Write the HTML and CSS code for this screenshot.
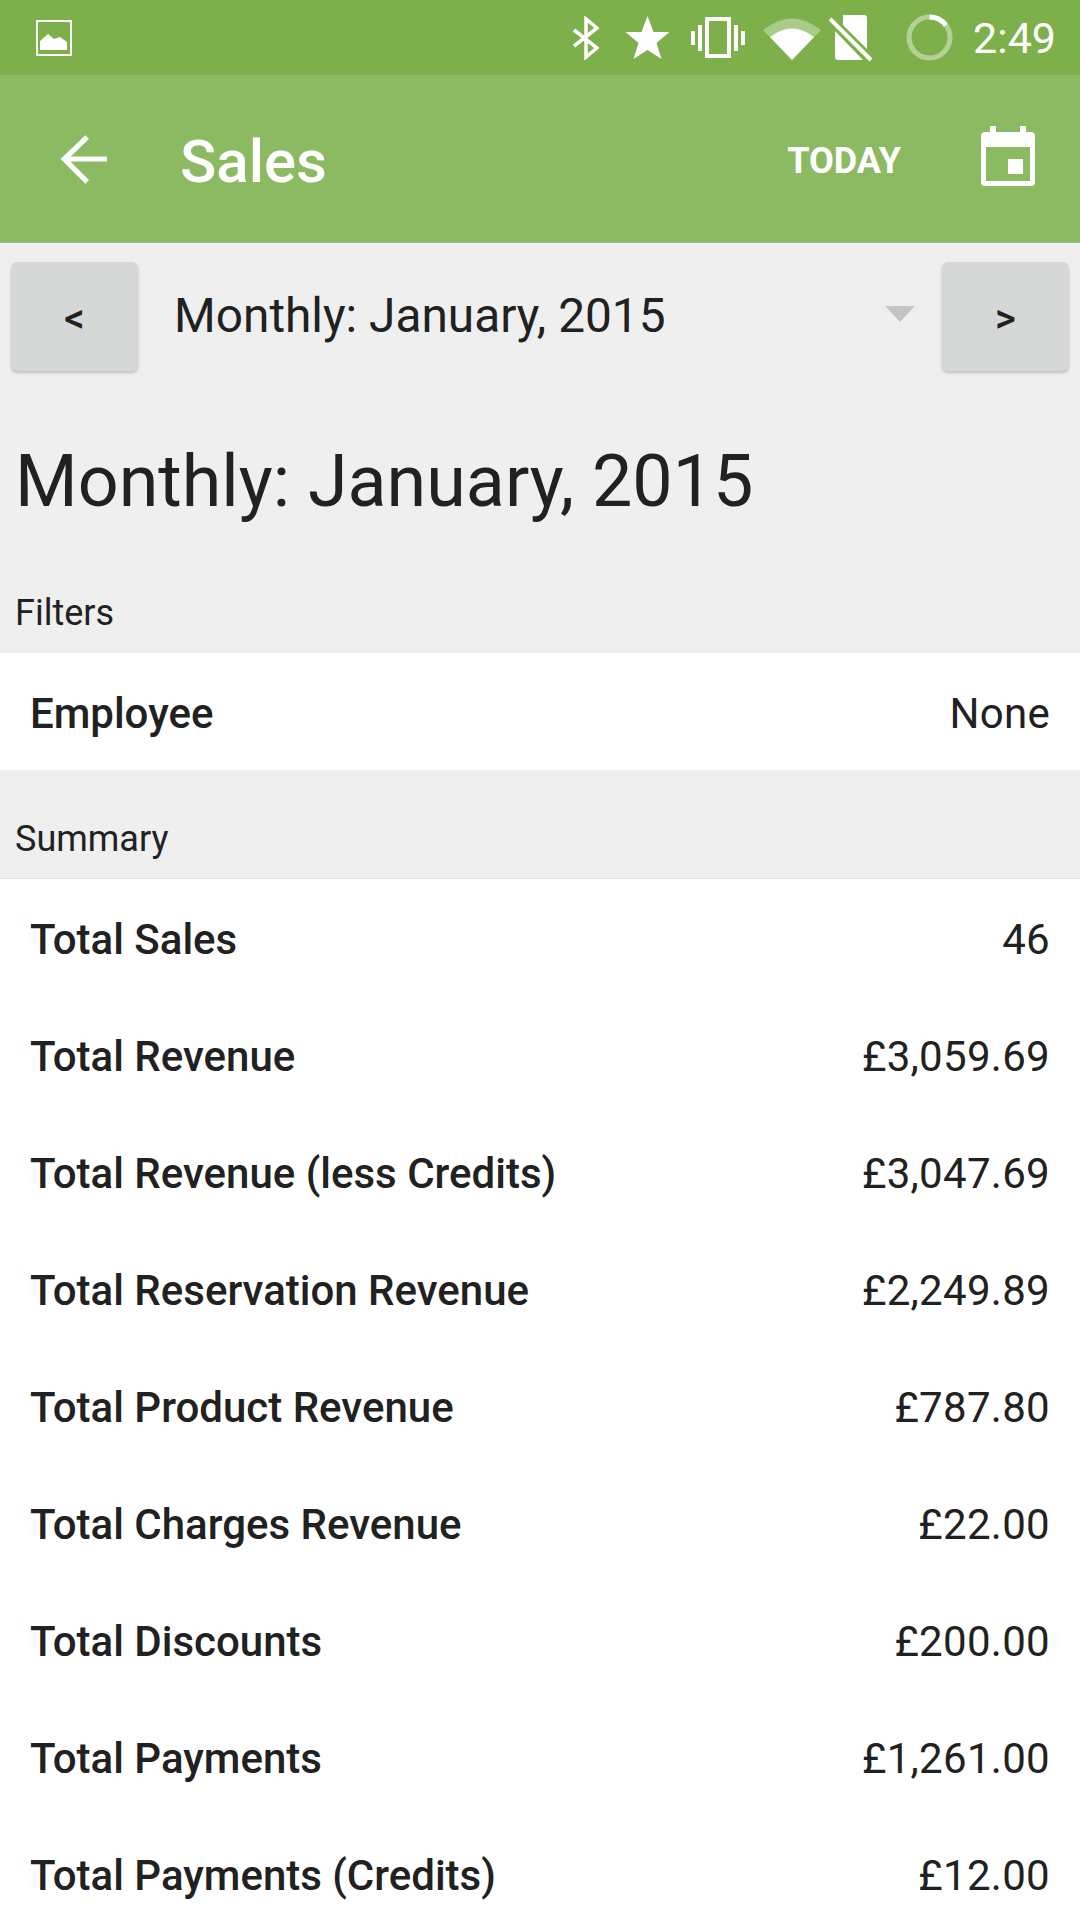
FILE: index.html
```html
<!DOCTYPE html>
<html lang="en">

<head>
    <meta charset="UTF-8">
    <meta name="viewport" content="width=device-width, initial-scale=1.0">
    <link rel="stylesheet" href="styles.css">
</head>

<body>
    <div class="StatusBar">
        <svg class="NotifIcon" width="36" height="36" viewBox="0 0 36 36">
            <path fill="#fff" fill-rule="evenodd" d="M0 0H36V36H0ZM2 2V34H34V2Z" />
            <path fill="#fff" d="M4 30V21L12 14L18 19L24 17L31 22V30Z" />
        </svg>
        <div class="StatusIcons">
            <svg class="IconBluetooth" width="26" height="44" viewBox="0 0 26 44">
                <path fill="none" stroke="#fff" stroke-width="3.5" d="M1 14L24 32L13 41V3L24 12L1 30" />
            </svg>
            <svg class="IconStar" width="45" height="44" viewBox="0 0 44 44">
                <path fill="#fff" d="M22 0L28 16L44 16L31 27L36 43L22 34L8 43L13 27L0 16L16 16Z" />
            </svg>
            <svg class="IconVibrate" width="54" height="42" viewBox="0 0 54 42">
                <path fill="none" stroke="#fff" stroke-width="4" d="M16 2H38V39H16Z" />
                <path fill="#fff" d="M0 14H4V28H0ZM7 8H11V34H7ZM43 8H47V34H43ZM50 14H54V28H50Z" />
            </svg>
            <svg class="IconWifi" width="58" height="44" viewBox="0 0 58 44">
                <path fill="#fff" opacity="0.35" d="M0 14Q29 -9 58 14L29 44Z" />
                <path fill="#fff" d="M7 21Q29 4 51 21L29 44Z" />
            </svg>
            <svg class="IconSim" width="44" height="48" viewBox="0 0 44 48">
                <path fill="#fff" d="M14 1H35Q38 1 38 4V35L14 11ZM6 10V43Q6 46 9 46H34L6 17Z" />
                <path fill="none" stroke="#fff" stroke-width="4" d="M1 5L42 46" />
            </svg>
            <svg class="IconBattery" width="47" height="47" viewBox="0 0 46 46">
                <circle cx="23" cy="23" r="20" fill="none" stroke="#fff" stroke-opacity="0.42" stroke-width="5" />
                <path fill="none" stroke="#fff" stroke-width="5" d="M23 3A20 20 0 0 1 39 11" />
            </svg>
            <span class="Clock">2:49</span>
        </div>
    </div>

    <div class="Toolbar">
        <svg class="BackArrow" width="50" height="50" viewBox="0 0 48 48">
            <path fill="none" stroke="#fff" stroke-width="5" d="M47 24H5M28 3L6 24L28 46" />
        </svg>
        <div class="ToolbarTitle">Sales</div>
        <div class="TodayButton">TODAY</div>
        <svg class="CalendarIcon" width="54" height="60" viewBox="0 0 54 60">
            <path fill="#fff" fill-rule="evenodd"
                d="M9 0H15V6H39V0H45V6H50Q54 6 54 10V56Q54 60 50 60H4Q0 60 0 56V10Q0 6 4 6H9ZM5 21V55H49V21Z" />
            <path fill="#fff" d="M27 33H42V48H27Z" />
        </svg>
    </div>

    <div class="DateNav">
        <div class="NavButton">&lt;</div>
        <div class="DateSpinner">
            <span>Monthly: January, 2015</span>
            <div class="SpinnerArrow"></div>
        </div>
        <div class="NavButton">&gt;</div>
    </div>

    <h1 class="PeriodTitle">Monthly: January, 2015</h1>

    <div class="SectionLabel FiltersLabel">Filters</div>
    <div class="Row">
        <span class="RowName">Employee</span>
        <span class="RowValue">None</span>
    </div>

    <div class="SectionLabel SummaryLabel">Summary</div>
    <div class="SummaryList">
        <div class="Row"><span class="RowName">Total Sales</span><span class="RowValue">46</span></div>
        <div class="Row"><span class="RowName">Total Revenue</span><span class="RowValue">£3,059.69</span></div>
        <div class="Row"><span class="RowName">Total Revenue (less Credits)</span><span class="RowValue">£3,047.69</span></div>
        <div class="Row"><span class="RowName">Total Reservation Revenue</span><span class="RowValue">£2,249.89</span></div>
        <div class="Row"><span class="RowName">Total Product Revenue</span><span class="RowValue">£787.80</span></div>
        <div class="Row"><span class="RowName">Total Charges Revenue</span><span class="RowValue">£22.00</span></div>
        <div class="Row"><span class="RowName">Total Discounts</span><span class="RowValue">£200.00</span></div>
        <div class="Row"><span class="RowName">Total Payments</span><span class="RowValue">£1,261.00</span></div>
        <div class="Row"><span class="RowName">Total Payments (Credits)</span><span class="RowValue">£12.00</span></div>
    </div>
</body>

</html>
```

FILE: styles.css
```css
html {
    height: 100%;
    overflow: hidden;
}

body {
    margin: 0;
    height: 1920px;
    overflow: hidden;
    font-family: 'Roboto', sans-serif;
    background-color: #efefef;
    color: #212121;
}

.StatusBar {
    height: 75px;
    background-color: #7db04a;
    display: flex;
    align-items: center;
    justify-content: space-between;
    padding: 0 24px 0 36px;
    box-sizing: border-box;
}

.NotifIcon {
    margin-top: 1px;
}

.StatusIcons {
    display: flex;
    align-items: center;
}

.IconBluetooth {
    margin-right: 26px;
}

.IconStar {
    margin-right: 21px;
}

.IconVibrate {
    margin-right: 18px;
}

.IconWifi {
    margin-right: 8px;
}

.IconSim {
    margin-right: 33px;
}

.IconBattery {
    margin-right: 20px;
}

.Clock {
    color: #ffffff;
    font-size: 43px;
}

.Toolbar {
    height: 168px;
    background-color: #8cba62;
    border-bottom: 1px solid #a3b893;
    box-sizing: border-box;
    display: flex;
    align-items: center;
    padding: 0 45px 0 58px;
    color: #ffffff;
}

.BackArrow {
    margin-right: 72px;
}

.ToolbarTitle {
    flex: 1;
    padding-top: 5px;
    font-size: 60px;
    font-weight: 500;
}

.TodayButton {
    padding-top: 5px;
    font-size: 36px;
    font-weight: 700;
    margin-right: 80px;
}

.CalendarIcon {
    margin-bottom: 6px;
}

.DateNav {
    display: flex;
    align-items: center;
    padding: 19px 11px 0 11px;
}

.NavButton {
    width: 127px;
    height: 109px;
    padding-top: 4px;
    box-sizing: border-box;
    background-color: #d6d7d7;
    border-radius: 6px;
    box-shadow: 0 2px 3px rgba(0, 0, 0, 0.2);
    display: flex;
    align-items: center;
    justify-content: center;
    font-size: 40px;
    font-weight: 500;
}

.DateSpinner {
    flex: 1;
    display: flex;
    align-items: center;
    justify-content: space-between;
    padding: 0 27px 1px 36px;
    font-size: 47.8px;
}

.SpinnerArrow {
    width: 0;
    height: 0;
    margin-bottom: 5px;
    border-left: 15px solid transparent;
    border-right: 15px solid transparent;
    border-top: 16px solid #c4c4c4;
}

.PeriodTitle {
    margin: 0;
    padding: 69px 0 0 15px;
    font-size: 71.8px;
    font-weight: 400;
    line-height: 84px;
}

.SectionLabel {
    padding-left: 15px;
    font-size: 36px;
    line-height: 42px;
}

.FiltersLabel {
    padding-top: 68px;
    padding-bottom: 19px;
}

.SummaryLabel {
    padding-top: 48px;
    padding-bottom: 18px;
    border-bottom: 1px solid #e2e2e2;
}

.Row {
    height: 117px;
    background-color: #ffffff;
    display: flex;
    align-items: center;
    justify-content: space-between;
    padding: 4px 30px 0;
    font-size: 42px;
    box-sizing: border-box;
}

.RowName {
    font-weight: 500;
}

.RowValue {
    letter-spacing: 0.3px;
}
```
